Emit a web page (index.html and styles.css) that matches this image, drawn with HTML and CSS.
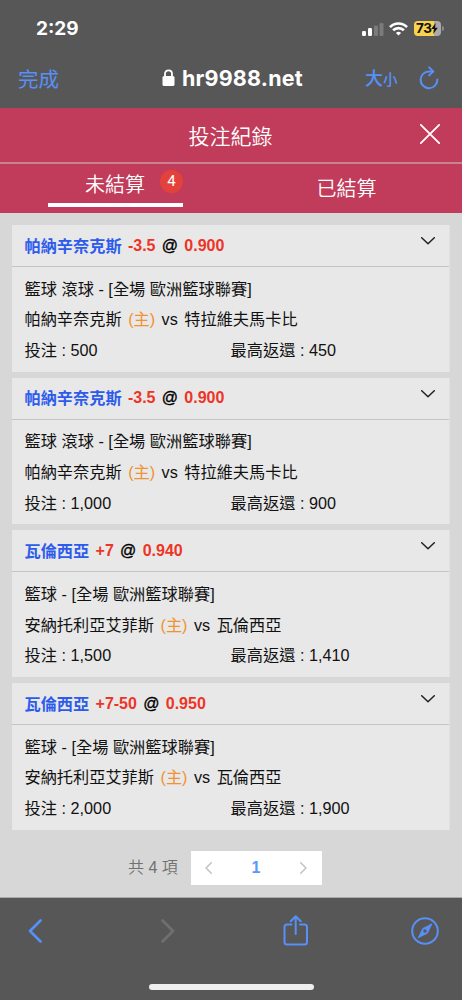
FILE: index.html
```html
<!DOCTYPE html>
<html lang="zh-Hant">
<head>
<meta charset="utf-8">
<meta name="viewport" content="width=device-width, initial-scale=1">
<title>投注紀錄</title>
<link rel="stylesheet" href="styles.css">
</head>
<body>
<div class="screen">
  <header class="browser-top">
    <div class="status">
      <span class="clock">2:29</span>
      <div class="status-icons">
        <svg width="22" height="14" viewBox="0 0 22 14"><g fill="#fff"><rect x="0" y="9" width="4" height="5" rx="1.2"/><rect x="6" y="6" width="4" height="8" rx="1.2"/></g><g fill="#7b7b7b"><rect x="12" y="3.5" width="4" height="10.500" rx="1.2"/><rect x="17.500" y="1" width="4" height="13" rx="1.2"/></g></svg>
        <svg class="wifi" width="19" height="14" viewBox="0 0 19 14" fill="none" stroke="#fff" stroke-width="2.700"><path d="M1 5.100C5.800.3 13.200.3 18 5.100"/><path d="M4.100 8.300C7.100 5.300 11.900 5.300 14.900 8.300"/><path d="M9.500 13.500 6.900 10.900C8.400 9.500 10.600 9.500 12.100 10.900Z" fill="#fff" stroke="none"/></svg>
        <div class="battery"><span>73</span><svg width="7" height="11" viewBox="0 0 7 11"><path d="M4.700 0 .2 6h2.700L2.200 11 6.800 4.700H4Z" fill="#111"/></svg></div>
        <i class="battery-cap"></i>
      </div>
    </div>
    <div class="address">
      <span class="done">完成</span>
      <div class="site"><svg width="13" height="17" viewBox="0 0 13 17"><rect x=".5" y="7" width="12" height="10" rx="1.600" fill="#fff"/><path d="M3 7.500V4.800C3 .1 10 .1 10 4.800V7.500" fill="none" stroke="#fff" stroke-width="1.800"/></svg><span class="domain">hr9988.net</span></div>
      <span class="text-size">大<small>小</small></span>
      <svg class="reload" width="20" height="24" viewBox="0 0 20 24" fill="none" stroke="#5790f7" stroke-width="2" stroke-linecap="round" stroke-linejoin="round"><path d="M14.200 5.400H10A8.400 8.400 0 1 0 18.400 13.600"/><path d="M10.200 1.400 14.200 5.400 10.200 9.400"/></svg>
    </div>
  </header>

  <section class="title-bar">
    <h1>投注紀錄</h1>
    <svg class="close" width="20" height="20" viewBox="0 0 20 20"><path d="M.8.8 19.200 19.200M19.200.8.8 19.200" stroke="#fff" stroke-width="1.800"/></svg>
  </section>
  <nav class="tabs">
    <div class="tab active"><div class="tab-inner"><span>未結算</span><b class="badge">4</b></div></div>
    <div class="tab"><span>已結算</span></div>
  </nav>

  <main class="content">
    <article class="card">
      <div class="card-head"><b class="team">帕納辛奈克斯</b><b class="odds">-3.5</b><b class="at">@</b><b class="odds">0.900</b><svg class="chevron" width="14" height="8" viewBox="0 0 14 8"><path d="M.7.7 7 6.800 13.300.7"/></svg></div>
      <div class="card-body">
        <p class="league">籃球 滾球 - [全場 歐洲籃球聯賽]</p>
        <p class="match"><span>帕納辛奈克斯</span><span class="home">(主)</span><span>vs</span><span>特拉維夫馬卡比</span></p>
        <p class="amounts"><span>投注 : 500</span><span>最高返還 : 450</span></p>
      </div>
    </article>
    <article class="card">
      <div class="card-head"><b class="team">帕納辛奈克斯</b><b class="odds">-3.5</b><b class="at">@</b><b class="odds">0.900</b><svg class="chevron" width="14" height="8" viewBox="0 0 14 8"><path d="M.7.7 7 6.800 13.300.7"/></svg></div>
      <div class="card-body">
        <p class="league">籃球 滾球 - [全場 歐洲籃球聯賽]</p>
        <p class="match"><span>帕納辛奈克斯</span><span class="home">(主)</span><span>vs</span><span>特拉維夫馬卡比</span></p>
        <p class="amounts"><span>投注 : 1,000</span><span>最高返還 : 900</span></p>
      </div>
    </article>
    <article class="card">
      <div class="card-head"><b class="team">瓦倫西亞</b><b class="odds">+7</b><b class="at">@</b><b class="odds">0.940</b><svg class="chevron" width="14" height="8" viewBox="0 0 14 8"><path d="M.7.7 7 6.800 13.300.7"/></svg></div>
      <div class="card-body">
        <p class="league">籃球 - [全場 歐洲籃球聯賽]</p>
        <p class="match"><span>安納托利亞艾菲斯</span><span class="home">(主)</span><span>vs</span><span>瓦倫西亞</span></p>
        <p class="amounts"><span>投注 : 1,500</span><span>最高返還 : 1,410</span></p>
      </div>
    </article>
    <article class="card">
      <div class="card-head"><b class="team">瓦倫西亞</b><b class="odds">+7-50</b><b class="at">@</b><b class="odds">0.950</b><svg class="chevron" width="14" height="8" viewBox="0 0 14 8"><path d="M.7.7 7 6.800 13.300.7"/></svg></div>
      <div class="card-body">
        <p class="league">籃球 - [全場 歐洲籃球聯賽]</p>
        <p class="match"><span>安納托利亞艾菲斯</span><span class="home">(主)</span><span>vs</span><span>瓦倫西亞</span></p>
        <p class="amounts"><span>投注 : 2,000</span><span>最高返還 : 1,900</span></p>
      </div>
    </article>
    <div class="pagination">
      <span class="total">共 4 項</span>
      <div class="pager">
        <svg width="7" height="12" viewBox="0 0 7 12"><path d="M6.300.7 1 6 6.300 11.300"/></svg>
        <b>1</b>
        <svg width="7" height="12" viewBox="0 0 7 12"><path d="M.7.7 6 6 .7 11.300"/></svg>
      </div>
    </div>
  </main>

  <footer class="toolbar">
    <div class="tools">
      <svg width="14" height="24" viewBox="0 0 14 24" stroke="#5790f7" stroke-width="2.600"><path d="M12.500 1.500 2 12 12.500 22.500"/></svg>
      <svg width="14" height="24" viewBox="0 0 14 24" stroke="#707070" stroke-width="2.600"><path d="M1.500 1.500 12 12 1.500 22.500"/></svg>
      <svg class="share" width="25" height="31" viewBox="0 0 25 31" stroke="#5790f7" stroke-width="2"><path d="M8.500 9.500H4Q1.500 9.500 1.500 12V27Q1.500 29.500 4 29.500H21.500Q24 29.500 24 27V12Q24 9.500 21.500 9.500H17M12.700 19V1.500M7.700 6.300 12.700 1.300 17.700 6.300"/></svg>
      <svg width="28" height="28" viewBox="0 0 28 28" stroke="#5790f7" stroke-width="2"><circle cx="14" cy="14" r="12.800"/><path d="M20.700 7.300 16.400 16.200 7.400 20.600 11.700 11.800Z" fill="#5790f7" stroke-width="1"/><circle cx="14" cy="14" r="1.700" fill="#575757" stroke="none"/></svg>
    </div>
    <i class="home-indicator"></i>
  </footer>
</div>
</body>
</html>
```
FILE: styles.css
```css
* { box-sizing: border-box; }
body { margin: 0; background: #575757; font-family: "Liberation Sans", "Noto Sans CJK TC", sans-serif; }
h1, p { margin: 0; font-weight: 400; }
svg { display: block; flex: none; fill: none; stroke-linecap: round; stroke-linejoin: round; }
.screen { width: 462px; height: 1000px; display: flex; flex-direction: column; overflow: hidden; }

.browser-top { height: 108px; background: #575757; color: #fff; flex: none; }
.status { height: 56px; display: flex; justify-content: space-between; padding: 17px 18px 0 36px; }
.clock { font: 700 19px/24px Inter, sans-serif; }
.status-icons { display: flex; align-items: center; height: 23px; }
.wifi { margin: 0 6px 0 5px; stroke-linecap: butt; }
.battery { width: 27px; height: 15px; border-radius: 4px; background: linear-gradient(90deg, #f8d34b 20px, #aaa 20px); color: #111; display: flex; align-items: center; padding-left: 2px; }
.battery span { font: 700 13.500px/15px Inter, sans-serif; letter-spacing: -.5px; }
.battery-cap { width: 2px; height: 5px; margin-left: 1px; border-radius: 0 2px 2px 0; background: #8c8c8c; }
.address { height: 43px; display: grid; grid-template-columns: 144px 203px 63px 1fr; align-items: center; padding-left: 18px; }
.done, .text-size { color: #5790f7; font-family: "Noto Sans CJK TC", sans-serif; }
.done { font-size: 20.500px; line-height: 30px; }
.site { display: flex; align-items: center; gap: 7px; }
.domain { font: 700 21.500px/26px Inter, sans-serif; letter-spacing: .2px; }
.text-size { font-size: 18px; font-weight: 500; line-height: 30px; white-space: nowrap; }
.text-size small { font-size: 14.500px; }
.reload { margin-left: -9px; }

.title-bar { height: 56px; background: #c13b5a; border-bottom: 2px solid #ca8290; display: grid; grid-template-columns: 1fr auto 1fr; align-items: center; padding-right: 22px; flex: none; color: #fff; }
.title-bar h1 { grid-column: 2; font: 350 21px/30px "Noto Sans CJK TC", sans-serif; margin: 0 0 1px 21px; }
.close { justify-self: end; margin-bottom: 2px; }
.tabs { height: 49px; background: #c13b5a; color: #fff; display: flex; flex: none; font: 350 20px/30px "Noto Sans CJK TC", sans-serif; }
.tab { flex: 1; text-align: center; padding-top: 9px; }
.active { padding: 5px 0 0; }
.tab-inner { width: 135px; height: 38px; margin-left: 48px; border-bottom: 4px solid #fff; display: flex; padding-left: 37px; }
.badge { width: 23px; height: 23px; border-radius: 50%; background: #e2423b; margin: 1px 0 0 15px; font: 400 15px/22px Roboto, sans-serif; }

.content { height: 685px; background: #d7d7d7; padding: 12px 12px 0; display: flex; flex-direction: column; gap: 6px; flex: none; border-bottom: 1px solid #aaa; }
.card { height: 146.700px; flex: none; background: #e8e8e8; color: #111; font-size: 16.200px; border-right: 1px solid #e1e1e1; }
.card-head { height: 42px; border-bottom: 1px solid #c5c5c5; padding: 0 14px 0 12.500px; display: flex; align-items: center; gap: 6.300px; line-height: 24px; }
.team { color: #2d5cec; font-size: 16.200px; }
.odds { color: #ee3426; font-size: 16px; }
.at { font-size: 16px; color: #000; font-weight: 400; -webkit-text-stroke: .35px #000; }
.chevron { margin: 0 0 9px auto; stroke: #222; stroke-width: 1.500; }
.card-body { padding: 6.500px 12.500px 0; line-height: 30.800px; white-space: nowrap; }
.league, .match, .amounts { height: 30.800px; }
.league { letter-spacing: .03px; }
.match { display: flex; gap: 6.500px; }
.home { color: #ef9230; }
.amounts { display: grid; grid-template-columns: 206px 1fr; letter-spacing: .03px; }
.pagination { margin: 15px 0 0 116px; display: flex; align-items: center; gap: 13px; }
.total { color: #707070; font-size: 16px; font-weight: 350; line-height: 34px; width: 50px; white-space: nowrap; }
.pager { width: 131px; height: 34px; background: #fff; display: flex; align-items: center; justify-content: space-between; padding: 0 15px 0 14px; }
.pager svg { stroke: #bfc2c8; stroke-width: 1.500; }
.pager b { color: #569bf7; font-size: 16px; }

.toolbar { flex: 1; background: #575757; display: flex; flex-direction: column; align-items: center; }
.tools { width: 100%; height: 66px; display: grid; grid-template-columns: 133px 122px 128px 28px; align-items: center; padding-left: 28px; }
.share { margin-bottom: 2px; }
.home-indicator { width: 165px; height: 6px; margin-top: 20px; background: #eee; border-radius: 3px; }
```
